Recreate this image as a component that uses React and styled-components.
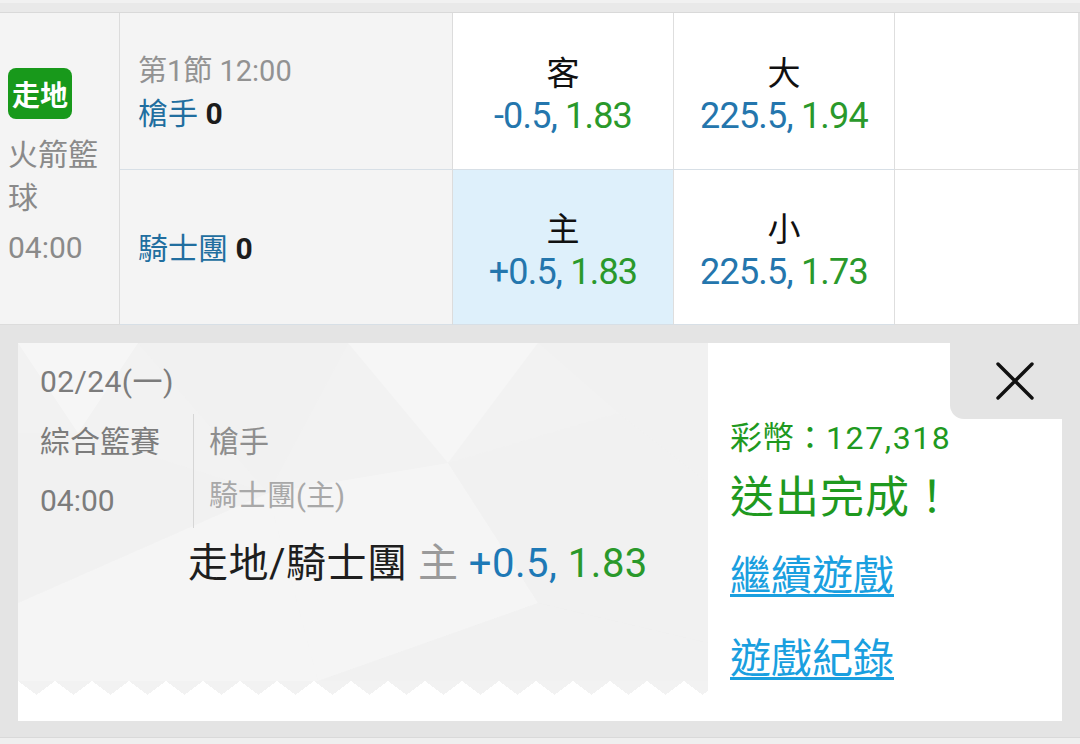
import React from 'react'
import styled, { createGlobalStyle } from 'styled-components'

const GlobalStyle = createGlobalStyle`
    html, body {
        margin: 0;
        padding: 0;
        background: #e4e4e4;
    }
    body {
        font-family: Roboto, "Noto Sans CJK TC", "Noto Sans", sans-serif;
        width: 1080px;
        height: 744px;
        overflow: hidden;
    }
`

const BLUE = '#2476ad'
const GREEN = '#2a992b'

const markets = [
    [
        { label: '客', line: '-0.5,', odds: '1.83' },
        { label: '大', line: '225.5,', odds: '1.94' },
    ],
    [
        { label: '主', line: '+0.5,', odds: '1.83', picked: true },
        { label: '小', line: '225.5,', odds: '1.73' },
    ],
]

const teams = [
    { name: '槍手', score: 0, period: '第1節 12:00' },
    { name: '騎士團', score: 0 },
]

const App = () => {
    return (
        <Page>
            <GlobalStyle />
            <TopBar />
            <MatchTable>
                <LeagueCell>
                    <LiveBadge>走地</LiveBadge>
                    <LeagueName>火箭籃球</LeagueName>
                    <LeagueTime>04:00</LeagueTime>
                </LeagueCell>
                {teams.map((t, i) => (
                    <React.Fragment key={t.name}>
                        <TeamCell $row={i + 1}>
                            {t.period && <Period>{t.period}</Period>}
                            <TeamName>
                                {t.name} <b>{t.score}</b>
                            </TeamName>
                        </TeamCell>
                        {markets[i].map((m) => (
                            <OddsCell key={m.label} $row={i + 1} $picked={m.picked}>
                                <OddsLabel>{m.label}</OddsLabel>
                                <OddsValue>
                                    <span className="line">{m.line}</span>{' '}
                                    <span className="odds">{m.odds}</span>
                                </OddsValue>
                            </OddsCell>
                        ))}
                        <EmptyCell $row={i + 1} />
                    </React.Fragment>
                ))}
            </MatchTable>

            <Overlay>
                <ReceiptCard>
                    <TicketSide>
                        <Ticket>
                            <Facets viewBox="0 0 690 338" preserveAspectRatio="none">
                                <polygon points="0,0 120,0 60,90" fill="#ffffff" opacity="0.35" />
                                <polygon points="120,0 330,0 250,150" fill="#eeeeee" opacity="0.25" />
                                <polygon points="330,0 520,0 430,120" fill="#ffffff" opacity="0.3" />
                                <polygon points="520,0 690,0 690,140 600,70" fill="#eeeeee" opacity="0.2" />
                                <polygon points="0,90 60,90 250,150 0,260" fill="#efefef" opacity="0.2" />
                                <polygon points="250,150 430,120 520,260 300,338" fill="#ffffff" opacity="0.28" />
                                <polygon points="430,120 600,70 690,140 690,300 520,260" fill="#eeeeee" opacity="0.2" />
                                <polygon points="0,260 250,150 300,338 0,338" fill="#ffffff" opacity="0.25" />
                                <polygon points="520,260 690,300 690,338 300,338" fill="#eeeeee" opacity="0.25" />
                            </Facets>
                            <TicketBody>
                                <TicketDate>02/24(一)</TicketDate>
                                <MatchInfo>
                                    <InfoLeft>
                                        <div>綜合籃賽</div>
                                        <div>04:00</div>
                                    </InfoLeft>
                                    <InfoRight>
                                        <div>槍手</div>
                                        <div className="home">騎士團(主)</div>
                                    </InfoRight>
                                </MatchInfo>
                                <BetLine>
                                    走地/騎士團 <span className="side">主</span>{' '}
                                    <span className="line">+0.5,</span>{' '}
                                    <span className="odds">1.83</span>
                                </BetLine>
                            </TicketBody>
                        </Ticket>
                        <Zigzag />
                    </TicketSide>

                    <ResultSide>
                        <CloseTab aria-label="close">
                            <svg width="38" height="38" viewBox="0 0 38 38">
                                <path
                                    d="M2 2 L36 36 M36 2 L2 36"
                                    stroke="#111"
                                    strokeWidth="3.4"
                                    strokeLinecap="round"
                                    fill="none"
                                />
                            </svg>
                        </CloseTab>
                        <Balance>
                            彩幣：<span>127,318</span>
                        </Balance>
                        <Done>送出完成！</Done>
                        <ActionLink href="#">繼續遊戲</ActionLink>
                        <ActionLink href="#">遊戲紀錄</ActionLink>
                    </ResultSide>
                </ReceiptCard>
            </Overlay>
            <BottomBar />
        </Page>
    )
}

const Page = styled.div`
    width: 1080px;
    height: 744px;
    display: flex;
    flex-direction: column;
    background: #e4e4e4;
`

const TopBar = styled.div`
    height: 9px;
    border-top: 3px solid #f1f1f1;
    border-bottom: 1px solid #d9d9d9;
    background: #e9e9e9;
    flex-shrink: 0;
`

const MatchTable = styled.div`
    display: grid;
    grid-template-columns: 120px 333px 221px 221px 1fr;
    grid-template-rows: 157px 155px;
    background: #fff;
    flex-shrink: 0;
    & > div {
        box-sizing: border-box;
    }
`

const LeagueCell = styled.div`
    grid-row: 1 / span 2;
    grid-column: 1;
    background: #f4f4f4;
    border-right: 1px solid #dcdcdc;
    border-bottom: 1px solid #dcdcdc;
    padding: 0 8px;
    display: flex;
    flex-direction: column;
    justify-content: center;
    align-items: flex-start;
`

const LiveBadge = styled.div`
    width: 64px;
    height: 51px;
    border-radius: 8px;
    background: #18991b;
    color: #fff;
    font-weight: 700;
    font-size: 28px;
    display: flex;
    align-items: center;
    justify-content: center;
`

const LeagueName = styled.div`
    margin-top: 14px;
    width: 100px;
    font-size: 30px;
    line-height: 43px;
    color: #8a8a8a;
`

const LeagueTime = styled.div`
    margin-top: 7px;
    font-size: 30px;
    line-height: 43px;
    color: #8a8a8a;
`

const TeamCell = styled.div`
    grid-row: ${(p) => p.$row};
    grid-column: 2;
    background: #f4f4f4;
    border-right: 1px solid #dcdcdc;
    border-bottom: 1px solid #d7dfe6;
    padding: 4px 18px 0;
    display: flex;
    flex-direction: column;
    justify-content: center;
`

const Period = styled.div`
    font-size: 29px;
    line-height: 42px;
    color: #929292;
`

const TeamName = styled.div`
    font-size: 30px;
    line-height: 44px;
    color: #216e9f;
    b {
        color: #1c1c1c;
        font-weight: 700;
        font-family: Roboto, sans-serif;
    }
`

const OddsCell = styled.div`
    grid-row: ${(p) => p.$row};
    background: ${(p) => (p.$picked ? '#def0fb' : '#fff')};
    border-right: 1px solid #dedede;
    border-bottom: 1px solid #d7dfe6;
    display: flex;
    flex-direction: column;
    align-items: center;
    justify-content: center;
    padding-top: 7px;
`

const EmptyCell = styled.div`
    grid-row: ${(p) => p.$row};
    grid-column: 5;
    background: #fff;
    border-right: 2px solid #e2e2e2;
    border-bottom: 1px solid #dedede;
`

const OddsLabel = styled.div`
    font-size: 33px;
    line-height: 42px;
    color: #111;
`

const OddsValue = styled.div`
    font-size: 36px;
    line-height: 42px;
    letter-spacing: -0.8px;
    .line {
        color: ${BLUE};
    }
    .odds {
        color: ${GREEN};
    }
`

const Overlay = styled.div`
    flex: 1;
    padding: 18px 18px 0;
`

const ReceiptCard = styled.div`
    height: 378px;
    display: grid;
    grid-template-columns: 690px 1fr;
    background: #fff;
`

const TicketSide = styled.div`
    display: flex;
    flex-direction: column;
    padding-bottom: 26px;
    background: #fff;
`

const Ticket = styled.div`
    position: relative;
    flex: 1;
    background: #f2f2f2;
    overflow: hidden;
`

const Facets = styled.svg`
    position: absolute;
    inset: 0;
    width: 100%;
    height: 100%;
`

const TicketBody = styled.div`
    position: relative;
    padding: 15px 0 0 22px;
`

const TicketDate = styled.div`
    font-size: 30px;
    line-height: 48px;
    letter-spacing: 0.4px;
    color: #7c7c7c;
`

const MatchInfo = styled.div`
    display: flex;
    margin-top: 8px;
    font-size: 30px;
    line-height: 55px;
`

const InfoLeft = styled.div`
    width: 153px;
    border-right: 1px solid #d6d6d6;
    color: #7c7c7c;
    div + div {
        padding-top: 4px;
    }
`

const InfoRight = styled.div`
    padding-left: 15px;
    color: #8e8e8e;
    .home {
        color: #a8a8a8;
        font-size: 29px;
    }
`

const BetLine = styled.div`
    margin: 10px 0 0 148px;
    font-size: 40px;
    line-height: 52px;
    letter-spacing: 0.5px;
    color: #1e1e1e;
    white-space: nowrap;
    .side {
        color: #9a9a9a;
    }
    .line {
        color: #1e79b6;
    }
    .odds {
        color: ${GREEN};
    }
`

const Zigzag = styled.div`
    height: 14px;
    flex-shrink: 0;
    background: conic-gradient(from -53deg at 50% 100%, #f2f2f2 0 106deg, #fff 0) 0 0 / 37px 14px repeat-x;
`

const ResultSide = styled.div`
    display: flex;
    flex-direction: column;
    align-items: flex-start;
    padding-left: 22px;
    background: #fff;
`

const CloseTab = styled.button`
    align-self: flex-end;
    width: 112px;
    height: 76px;
    border: none;
    margin: 0;
    padding: 0 0 0 18px;
    background: #e4e4e4;
    border-bottom-left-radius: 14px;
    display: flex;
    align-items: center;
    justify-content: center;
    cursor: pointer;
`

const Balance = styled.div`
    font-size: 32px;
    line-height: 38px;
    color: #1f991f;
    span {
        letter-spacing: 1.6px;
    }
`

const Done = styled.div`
    margin-top: 13px;
    font-size: 44px;
    line-height: 56px;
    letter-spacing: 1px;
    color: #1f991f;
`

const ActionLink = styled.a`
    margin-top: 20px;
    font-size: 41px;
    line-height: 60px;
    color: #1a9fdf;
    text-decoration: underline;
    text-decoration-thickness: 3px;
    text-underline-offset: 4px;
    & + & {
        margin-top: 23px;
    }
`

const BottomBar = styled.div`
    height: 6px;
    flex-shrink: 0;
    border-top: 1px solid #d9d9d9;
    background: #efefef;
`

export default App
